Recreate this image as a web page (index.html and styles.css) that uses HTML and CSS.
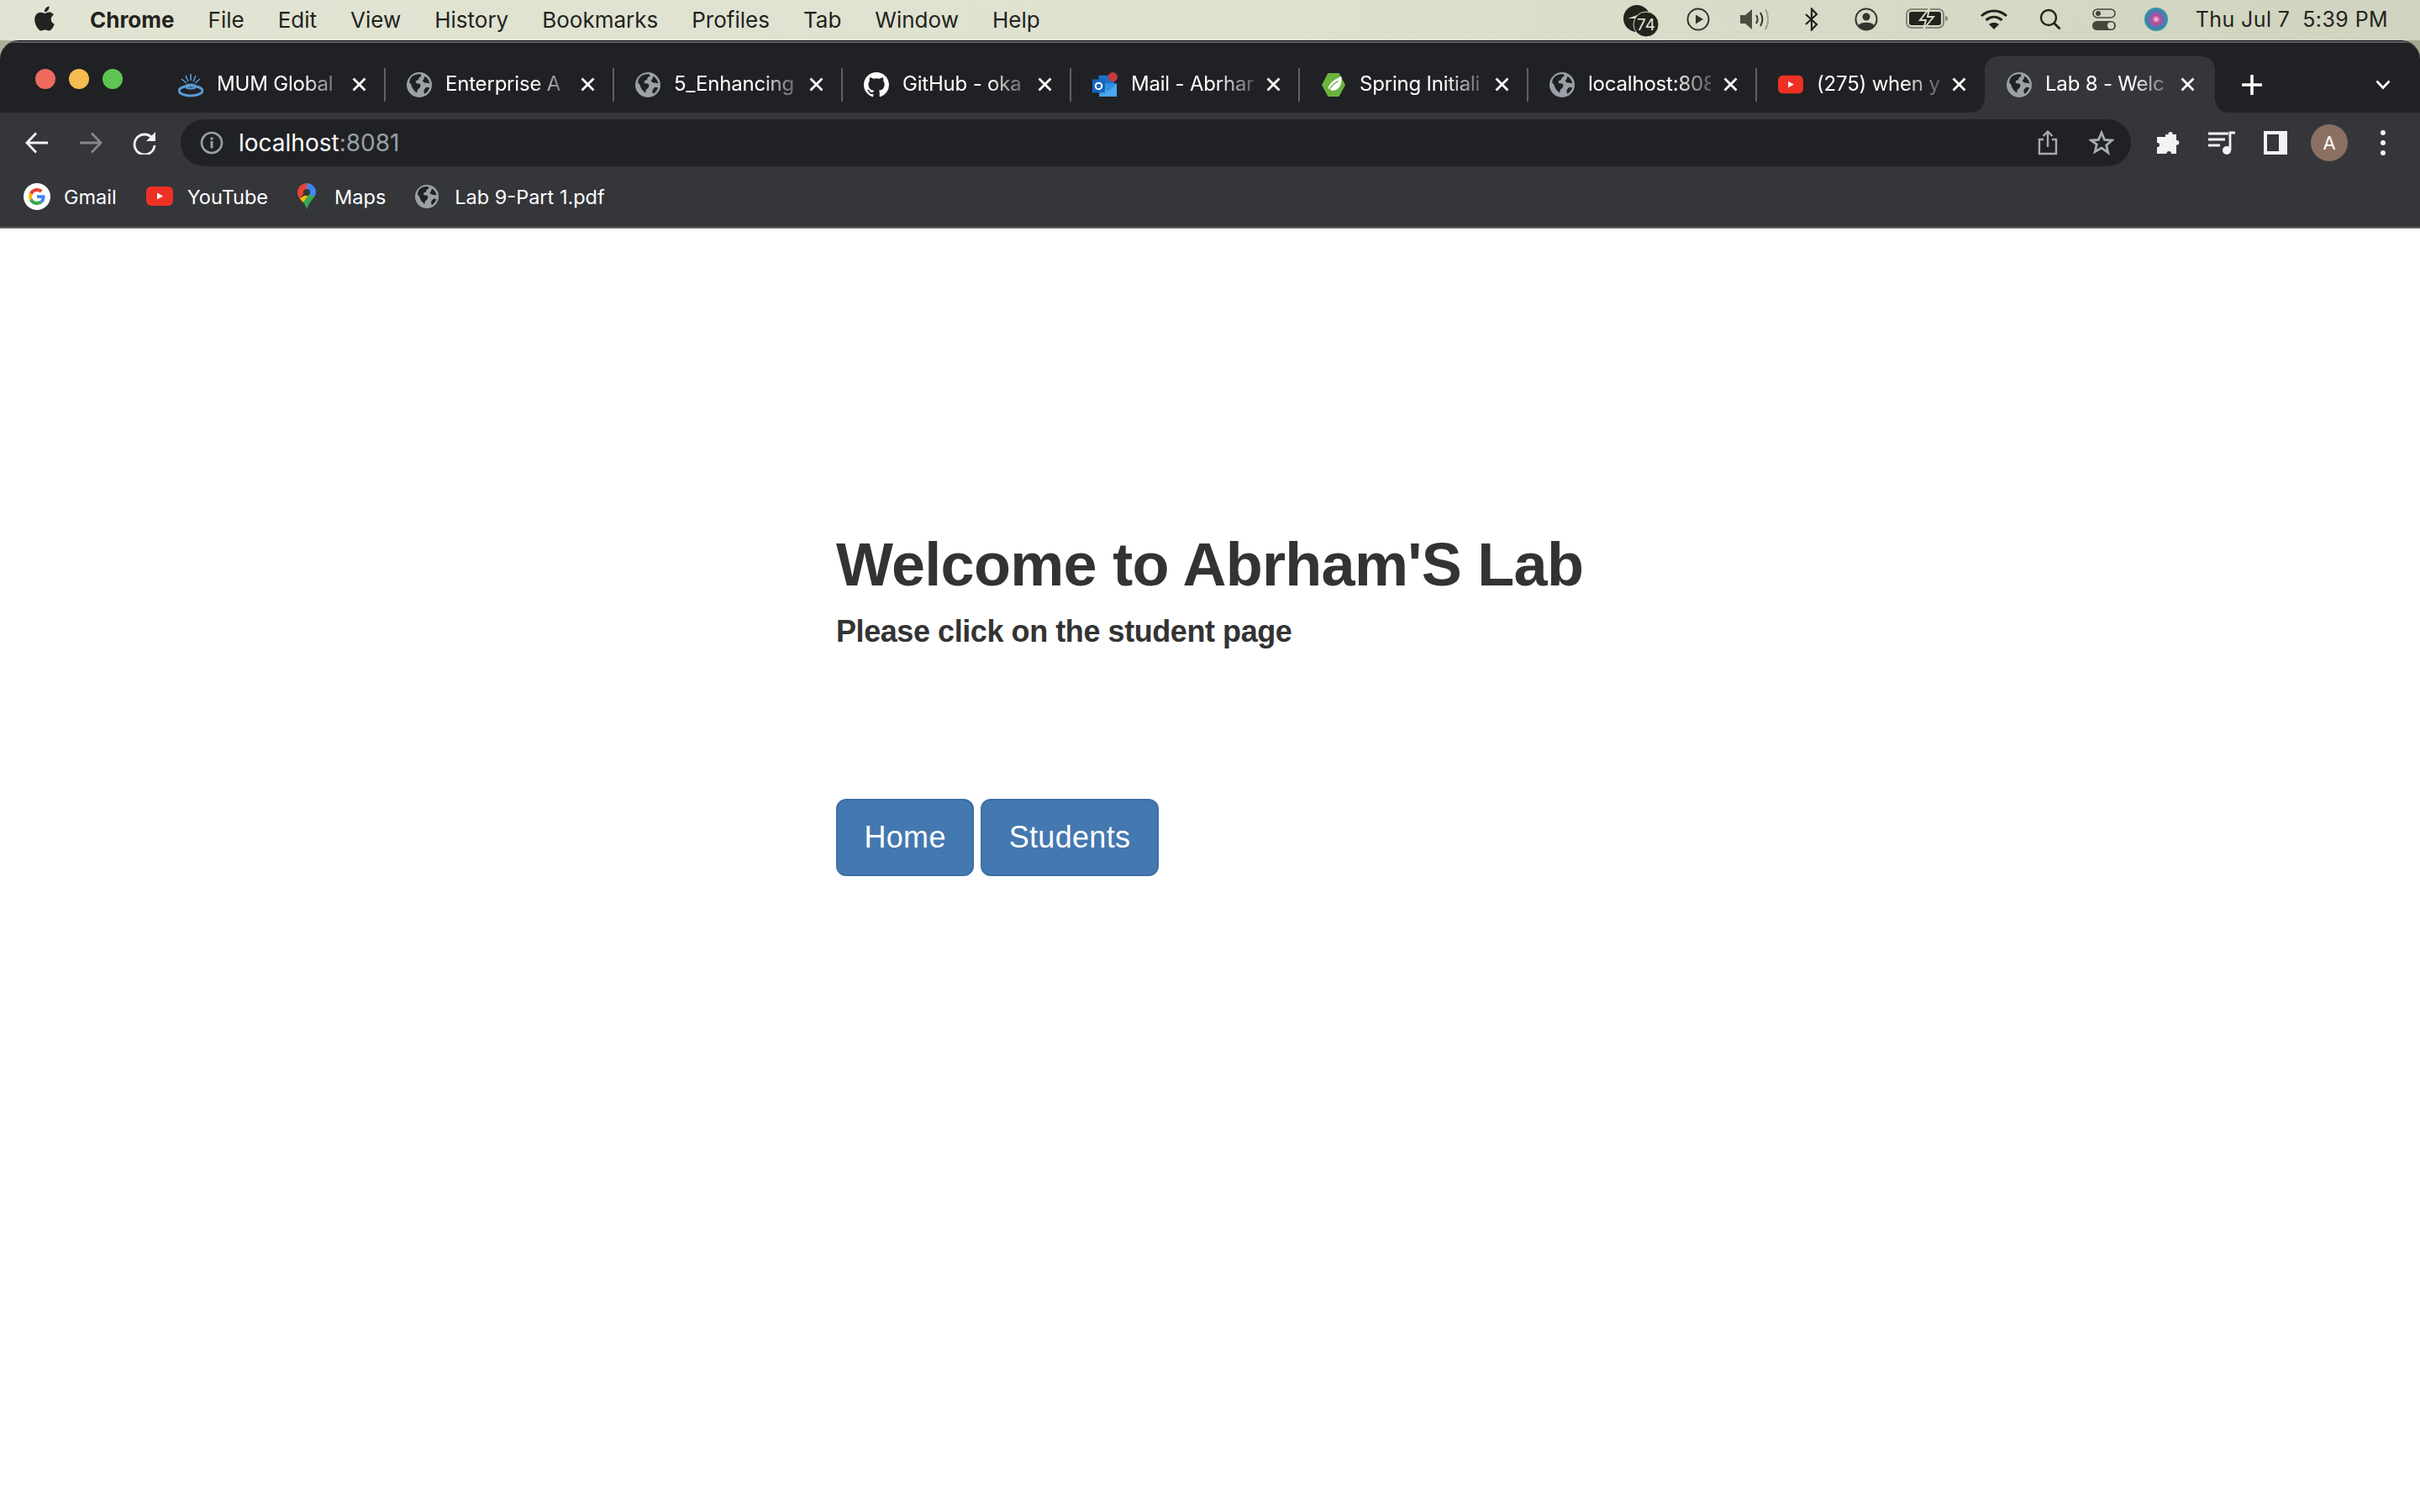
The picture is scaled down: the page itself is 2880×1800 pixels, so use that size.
FILE: index.html
```html
<!DOCTYPE html>

<html>
  <head>
    <title>Lab 8 - Welcome</title>
    <meta charset="utf-8" />
    <meta name="viewport" content="width=device-width, initial-scale=1" />
    <link rel="stylesheet" href="styles.css">
  </head>
  <body>
    <!-- shared icons -->
    <svg class="sprite" xmlns="http://www.w3.org/2000/svg">
      <symbol id="globe" viewBox="0 0 28 28">
        <circle cx="14" cy="14" r="14" fill="#9aa0a6"/>
        <path fill="#202124" d="M5 5.500C8 2.600 12 1.600 15.500 2.200l1 2-2.600 1.600-1 2.600-3 1.400.6 2.600 3.600.2 1.400 1.600-1 3-2.400 2.200-.8 3.400C8 20.800 5.600 17 5.200 14L3 11.500C3 9.500 3.800 7 5 5.500zM20 4.500c2.800 1.600 5 4.800 5.500 8l-2.500-.6-3.400-.3-2.200-2.100 1.400-1.500zM22 16.500l3.300.6c-.8 3-2.700 5.500-5.300 7l-1.200-2.600 1.200-3z"/>
      </symbol>
      <symbol id="close" viewBox="0 0 17 17">
        <path d="M1.500 1.500l14 14M15.500 1.500l-14 14" stroke="#fff" stroke-width="2.800" fill="none"/>
      </symbol>
      <symbol id="youtube" viewBox="0 0 32 24">
        <rect x="0" y="0" width="32" height="23" rx="6" fill="#ee3124"/>
        <path d="M13 7.500l7 4-7 4z" fill="#fff"/>
      </symbol>
    </svg>

    <div class="menubar">
      <svg class="apple" viewBox="0 0 26 32">
        <path fill="#22231f" d="M21.700 17c0-3.300 2.700-4.900 2.800-5-1.500-2.200-3.900-2.600-4.700-2.600-2-.2-3.900 1.200-4.900 1.200s-2.600-1.200-4.200-1.100c-2.200 0-4.200 1.200-5.300 3.200-2.300 3.900-.6 9.700 1.600 12.900 1.100 1.600 2.400 3.300 4.100 3.300 1.600-.1 2.300-1 4.200-1s2.500 1 4.200 1c1.700 0 2.900-1.600 3.900-3.200 1.200-1.800 1.700-3.600 1.800-3.700-.1 0-3.500-1.300-3.500-5zM18.500 7.300c.9-1.100 1.500-2.600 1.300-4.100-1.300.1-2.900.9-3.800 2-.8.9-1.500 2.500-1.300 3.900 1.400.1 2.900-.7 3.800-1.800z"/>
      </svg>
      <span class="menu-item app-name">Chrome</span>
      <span class="menu-item">File</span>
      <span class="menu-item">Edit</span>
      <span class="menu-item">View</span>
      <span class="menu-item">History</span>
      <span class="menu-item">Bookmarks</span>
      <span class="menu-item">Profiles</span>
      <span class="menu-item">Tab</span>
      <span class="menu-item">Window</span>
      <span class="menu-item">Help</span>

      <div class="status">
        <svg class="st st-badge" viewBox="0 0 42 38">
          <circle cx="16" cy="16" r="16" fill="#22231c"/>
          <path d="M5 16l17-6-5 9-3-3z" fill="#d6d9c6"/>
          <circle cx="27" cy="23" r="15" fill="#22231c" stroke="#d6d9c6" stroke-width="1"/>
          <text x="27" y="30" class="badge-num">74</text>
        </svg>
        <svg class="st st-play" viewBox="0 0 28 28">
          <circle cx="14" cy="14" r="12.500" fill="none" stroke="#33342c" stroke-width="2"/>
          <path d="M11 8.500l9 5.500-9 5.500z" fill="#33342c"/>
        </svg>
        <svg class="st st-sound" viewBox="0 0 38 28">
          <path d="M1 9h6l8-7v24l-8-7H1z" fill="#4b4c42"/>
          <path d="M20 9c2 3 2 7 0 10M25 6c3 5 3 11 0 16" fill="none" stroke="#33342c" stroke-width="2"/>
          <path d="M31 2c4 7 4 17 0 24" fill="none" stroke="#a0a294" stroke-width="2"/>
        </svg>
        <svg class="st st-bt" viewBox="0 0 18 28">
          <path d="M2 8l13 12-6 6.500V1.500l6 6.500L2 20" fill="none" stroke="#22231c" stroke-width="2.200"/>
        </svg>
        <svg class="st st-user" viewBox="0 0 28 28">
          <circle cx="14" cy="14" r="12.500" fill="none" stroke="#33342c" stroke-width="2"/>
          <circle cx="14" cy="11" r="4.500" fill="#33342c"/>
          <path d="M4.500 21c3-4.500 16-4.500 19 0-2 3-5 5.500-9.500 5.500S6.500 24 4.500 21z" fill="#33342c"/>
        </svg>
        <svg class="st st-battery" viewBox="0 0 52 26">
          <rect x="1" y="1" width="44" height="22" rx="6" fill="none" stroke="#85877a" stroke-width="2"/>
          <rect x="4" y="4" width="38" height="16" rx="3" fill="#22231c"/>
          <path d="M47 9c2 0 3 1 3 3s-1 3-3 3z" fill="#85877a"/>
          <path d="M28 0L17 14h7l-3 11 12-15h-7z" fill="#22231c" stroke="#d6d9c6" stroke-width="2"/>
        </svg>
        <svg class="st st-wifi" viewBox="0 0 34 26">
          <path d="M2 9c9-8 21-8 30 0M7.500 14c6-5 13-5 19 0" fill="none" stroke="#22231c" stroke-width="3"/>
          <path d="M17 25l-6-6c3.500-2.600 8.500-2.600 12 0z" fill="#22231c"/>
        </svg>
        <svg class="st st-search" viewBox="0 0 26 26">
          <circle cx="11" cy="11" r="9" fill="none" stroke="#22231c" stroke-width="2.400"/>
          <path d="M17.500 17.500l7 7" stroke="#22231c" stroke-width="2.800"/>
        </svg>
        <svg class="st st-control" viewBox="0 0 28 26">
          <rect x="1" y="1" width="26" height="10" rx="5" fill="none" stroke="#45463c" stroke-width="1.600"/>
          <circle cx="7" cy="6" r="3" fill="#45463c"/>
          <rect x="0" y="15" width="28" height="11" rx="5.500" fill="#45463c"/>
          <circle cx="22" cy="20.500" r="4" fill="#d6d9c6"/>
        </svg>
        <svg class="st st-siri" viewBox="0 0 28 28">
          <defs>
            <radialGradient id="siri-a" cx="0.5" cy="0.5" r="0.55">
              <stop offset="0" stop-color="#e8d8ec"/>
              <stop offset="0.3" stop-color="#c04a95"/>
              <stop offset="0.7" stop-color="#3f7fb5"/>
              <stop offset="1" stop-color="#2fa896"/>
            </radialGradient>
          </defs>
          <circle cx="14" cy="14" r="14" fill="url(#siri-a)"/>
        </svg>
        <span class="clock">Thu Jul 7&nbsp;&nbsp;5:39 PM</span>
      </div>
    </div>

    <div class="desk">
      <div class="window">
        <div class="tabstrip">
          <div class="lights">
            <i class="light red"></i>
            <i class="light yellow"></i>
            <i class="light green"></i>
          </div>

          <div class="tab sep">
            <svg class="favicon" viewBox="0 0 30 28">
              <g fill="none" stroke="#5b9bd5" stroke-width="1.600">
                <path d="M15 1v8M9 3l3 7M21 3l-3 7M4 7l6 5M26 7l-6 5"/>
              </g>
              <ellipse cx="15" cy="21" rx="14" ry="6" fill="none" stroke="#5b9bd5" stroke-width="3"/>
              <ellipse cx="15" cy="16" rx="6" ry="2.500" fill="none" stroke="#5b9bd5" stroke-width="2"/>
            </svg>
            <span class="tab-title">MUM Global</span>
            <svg class="tab-close"><use href="#close"/></svg>
          </div>
          <div class="tab sep">
            <svg class="favicon"><use href="#globe"/></svg>
            <span class="tab-title">Enterprise A</span>
            <svg class="tab-close"><use href="#close"/></svg>
          </div>
          <div class="tab sep">
            <svg class="favicon"><use href="#globe"/></svg>
            <span class="tab-title">5_Enhancing</span>
            <svg class="tab-close"><use href="#close"/></svg>
          </div>
          <div class="tab sep">
            <svg class="favicon" viewBox="0 0 16 16">
              <path fill="#fff" d="M8 0C3.580 0 0 3.580 0 8c0 3.540 2.290 6.530 5.470 7.590.4.070.55-.17.55-.38 0-.19-.01-.82-.01-1.490-2.010.37-2.530-.49-2.690-.94-.09-.23-.48-.94-.82-1.130-.28-.15-.68-.52-.01-.53.63-.01 1.080.58 1.230.82.72 1.210 1.870.87 2.330.66.07-.52.28-.87.51-1.070-1.780-.2-3.640-.89-3.640-3.950 0-.87.31-1.590.82-2.150-.08-.2-.36-1.020.08-2.120 0 0 .67-.21 2.200.82.64-.18 1.320-.27 2-.27.68 0 1.360.09 2 .27 1.530-1.040 2.200-.82 2.200-.82.44 1.100.16 1.920.08 2.120.51.56.82 1.270.82 2.150 0 3.070-1.870 3.750-3.650 3.950.29.25.54.73.54 1.480 0 1.070-.01 1.930-.01 2.200 0 .21.15.46.55.38A8.013 8.013 0 0016 8c0-4.420-3.580-8-8-8z"/>
            </svg>
            <span class="tab-title">GitHub - oka</span>
            <svg class="tab-close"><use href="#close"/></svg>
          </div>
          <div class="tab sep">
            <svg class="favicon" viewBox="0 0 32 32">
              <rect x="8" y="4" width="20" height="14" fill="#1f6fc4"/>
              <path d="M9 14h22v17H9z" fill="#2f8fe0"/>
              <path d="M9 15l11 9 11-9v16H9z" fill="#4ca8ec"/>
              <rect x="0" y="9" width="16" height="17" fill="#1565c0"/>
              <circle cx="8" cy="17.500" r="4" fill="none" stroke="#fff" stroke-width="2.200"/>
              <circle cx="26" cy="6" r="6" fill="#c43a3f"/>
            </svg>
            <span class="tab-title">Mail - Abrhar</span>
            <svg class="tab-close"><use href="#close"/></svg>
          </div>
          <div class="tab sep">
            <svg class="favicon" viewBox="0 0 30 32">
              <path d="M8 1h14l8 15-8 15H8L0 16z" fill="#6db33f"/>
              <path d="M25 5c1 9-2 17-9 18-4 .5-7-1-8-3 3-8 9-11 17-15z" fill="#fff"/>
              <path d="M9 23c3-6 7-9 12-12" stroke="#6db33f" stroke-width="1.500" fill="none"/>
            </svg>
            <span class="tab-title">Spring Initiali</span>
            <svg class="tab-close"><use href="#close"/></svg>
          </div>
          <div class="tab sep">
            <svg class="favicon"><use href="#globe"/></svg>
            <span class="tab-title">localhost:808</span>
            <svg class="tab-close"><use href="#close"/></svg>
          </div>
          <div class="tab">
            <svg class="favicon"><use href="#youtube"/></svg>
            <span class="tab-title">(275) when y</span>
            <svg class="tab-close"><use href="#close"/></svg>
          </div>
          <div class="tab active">
            <svg class="favicon"><use href="#globe"/></svg>
            <span class="tab-title">Lab 8 - Welc</span>
            <svg class="tab-close"><use href="#close"/></svg>
          </div>

          <svg class="new-tab" viewBox="0 0 24 24">
            <path d="M12 1v22M1 12h22" stroke="#fff" stroke-width="3.600" stroke-linecap="round"/>
          </svg>
          <svg class="tab-list" viewBox="0 0 18 12">
            <path d="M1.500 1.500L9 9.500l7.500-8" fill="none" stroke="#fff" stroke-width="2.600"/>
          </svg>
        </div>

        <div class="toolbar">
          <svg class="nav-icon" viewBox="0 0 28 26">
            <path d="M27 13H3M13 1.500L2 13l11 11.500" fill="none" stroke="#f1f3f4" stroke-width="2.800"/>
          </svg>
          <svg class="nav-icon dim" viewBox="0 0 28 26">
            <path d="M1 13h24M15 1.500L26 13 15 24.500" fill="none" stroke="#85878a" stroke-width="2.800"/>
          </svg>
          <svg class="nav-icon reload" viewBox="0 0 28 28">
            <path d="M23 8A12 12 0 1 0 26 17" fill="none" stroke="#f1f3f4" stroke-width="2.800"/>
            <path d="M27 1v11H16z" fill="#f1f3f4"/>
          </svg>
          <div class="omnibox">
            <svg class="info" viewBox="0 0 28 28">
              <circle cx="14" cy="14" r="12" fill="none" stroke="#9aa0a6" stroke-width="2.600"/>
              <rect x="12.500" y="12" width="3" height="8.500" fill="#9aa0a6"/>
              <rect x="12.500" y="7.500" width="3" height="3" fill="#9aa0a6"/>
            </svg>
            <span class="url">localhost<span class="url-port">:8081</span></span>
            <svg class="omni-share" viewBox="0 0 24 30">
              <path d="M7 11H2v17h20V11h-5" fill="none" stroke="#a8abae" stroke-width="2.400"/>
              <path d="M12 20V2M6.500 7L12 1.500 17.500 7" fill="none" stroke="#a8abae" stroke-width="2.400"/>
            </svg>
            <svg class="omni-star" viewBox="0 0 30 30">
              <path d="M15 3l3.500 8.300 9 .7-6.800 5.900 2.100 8.800L15 21.100l-7.800 4.600 2.100-8.800L2.500 12l9-.7z" fill="none" stroke="#a8abae" stroke-width="2.800"/>
            </svg>
          </div>
          <div class="toolbar-right">
            <svg class="puzzle" viewBox="0 0 30 30">
              <path fill="#f1f3f4" d="M11 5h3.500c-1-4 6-4 5 0H24v7c4-1 5 6 0 5.500V28h-6c.5-4-6-4-5.500 0H1v-8c4 1 4-6 0-5V8h10z"/>
            </svg>
            <svg class="media" viewBox="0 0 34 28">
              <path d="M0 3h24M0 10h20M0 17h14" stroke="#f1f3f4" stroke-width="2.800"/>
              <path d="M26 23V2h6" fill="none" stroke="#f1f3f4" stroke-width="2.800"/>
              <circle cx="22" cy="23" r="5" fill="#f1f3f4"/>
            </svg>
            <svg class="side-panel" viewBox="0 0 28 28">
              <path fill-rule="evenodd" fill="#f1f3f4" d="M0 0h28v28H0zM4 4v20h14V4z"/>
            </svg>
            <div class="avatar">A</div>
            <svg class="dots" viewBox="0 0 6 30">
              <circle cx="3" cy="3" r="3" fill="#f1f3f4"/>
              <circle cx="3" cy="15" r="3" fill="#f1f3f4"/>
              <circle cx="3" cy="27" r="3" fill="#f1f3f4"/>
            </svg>
          </div>
        </div>

        <div class="bookmarks">
          <div class="bookmark">
            <svg class="bm-g" viewBox="0 0 64 64">
              <circle cx="32" cy="32" r="32" fill="#fff"/>
              <g transform="translate(12 12) scale(0.833)">
                <path fill="#EA4335" d="M24 9.500c3.540 0 6.710 1.220 9.210 3.600l6.850-6.850C35.900 2.380 30.470 0 24 0 14.620 0 6.510 5.380 2.560 13.220l7.980 6.190C12.430 13.720 17.740 9.500 24 9.500z"/>
                <path fill="#4285F4" d="M46.980 24.550c0-1.570-.15-3.090-.38-4.550H24v9.020h12.940c-.58 2.960-2.260 5.480-4.780 7.180l7.730 6c4.510-4.180 7.090-10.360 7.090-17.650z"/>
                <path fill="#FBBC05" d="M10.530 28.590c-.48-1.450-.76-2.990-.76-4.590s.27-3.140.76-4.590l-7.980-6.190C.92 16.460 0 20.120 0 24c0 3.880.92 7.540 2.560 10.780l7.970-6.190z"/>
                <path fill="#34A853" d="M24 48c6.480 0 11.930-2.130 15.890-5.810l-7.730-6c-2.150 1.450-4.920 2.300-8.160 2.300-6.260 0-11.570-4.220-13.470-9.910l-7.980 6.190C6.510 42.620 14.620 48 24 48z"/>
              </g>
            </svg>
            <span>Gmail</span>
          </div>
          <div class="bookmark">
            <svg class="bm-yt"><use href="#youtube"/></svg>
            <span>YouTube</span>
          </div>
          <div class="bookmark">
            <svg class="bm-maps" viewBox="0 0 22 32">
              <path d="M11 0C5 0 0 5 0 11c0 3 1 5 2.500 7L11 9z" fill="#ea4335"/>
              <path d="M11 0c3 0 6 1.300 8 3.500L11 11z" fill="#4285f4"/>
              <path d="M19 3.500c2 2 3 4.500 3 7.500 0 2-1 4-2 5.500L11 11z" fill="#4285f4"/>
              <path d="M2.500 18C4 20 5 21 7 23l13-6.500-6-4.500-11.500 6z" fill="#fbbc05"/>
              <path d="M7 23c2 2.500 3.500 5 4 9 .5-4 3-8 9-15.500L14 12z" fill="#34a853"/>
              <circle cx="11" cy="11" r="4" fill="#35363a"/>
            </svg>
            <span>Maps</span>
          </div>
          <div class="bookmark">
            <svg class="favicon"><use href="#globe"/></svg>
            <span>Lab 9-Part 1.pdf</span>
          </div>
        </div>

        <main class="page">
          <h1 class="page-title">Welcome to Abrham'S Lab</h1>
          <h4 class="page-sub">Please click on the student page</h4>
          <div class="actions">
            <a class="btn">Home</a>
            <a class="btn">Students</a>
          </div>
        </main>
      </div>
    </div>
  </body>
</html>
```

FILE: styles.css
```css
html, body {
  margin: 0;
  padding: 0;
  height: 100%;
}

body {
  display: flex;
  flex-direction: column;
  width: 2880px;
  height: 1800px;
  overflow: hidden;
  font-family: Inter, "Liberation Sans", sans-serif;
  background-color: #fff;
}

.sprite {
  display: none;
}

/* mac menu bar */

.menubar {
  display: flex;
  align-items: center;
  flex: 0 0 48px;
  height: 48px;
  padding: 0 38px 2px 36px;
  box-sizing: border-box;
  background: linear-gradient(90deg, #e1e4d2, #dfe2cf 50%, #d0d3be);
  color: #22231f;
  font-size: 26px;
}

.apple {
  width: 30px;
  height: 36px;
  margin-right: 41px;
  margin-top: -2px;
}

.menu-item {
  margin-right: 40px;
  white-space: nowrap;
}

.app-name {
  font-weight: 700;
}

.status {
  display: flex;
  align-items: center;
  margin-left: auto;
  height: 100%;
}

.st {
  display: block;
  flex: none;
}

.st-badge {
  width: 42px;
  height: 38px;
  margin-top: 4px;
  margin-right: 33px;
}

.badge-num {
  fill: #e8e8e0;
  font-family: Inter, sans-serif;
  font-size: 19px;
  text-anchor: middle;
}

.st-play {
  width: 28px;
  height: 28px;
  margin-right: 35px;
}

.st-sound {
  width: 38px;
  height: 28px;
  margin-right: 39px;
}

.st-bt {
  width: 18px;
  height: 28px;
  margin-right: 42px;
}

.st-user {
  width: 28px;
  height: 28px;
  margin-right: 33px;
}

.st-battery {
  width: 52px;
  height: 26px;
  margin-right: 36px;
}

.st-wifi {
  width: 34px;
  height: 26px;
  margin-right: 37px;
}

.st-search {
  width: 26px;
  height: 26px;
  margin-right: 37px;
}

.st-control {
  width: 28px;
  height: 26px;
  margin-right: 34px;
}

.st-siri {
  width: 28px;
  height: 28px;
  margin-right: 33px;
}

.clock {
  font-size: 25px;
  letter-spacing: 0.400px;
  white-space: nowrap;
}

/* browser window */

.desk {
  flex: 1;
  display: flex;
  min-height: 0;
  background: linear-gradient(90deg, #aeb09a, #a6a88f);
}

.window {
  flex: 1;
  display: flex;
  flex-direction: column;
  min-width: 0;
  background-color: #fff;
  border-radius: 22px 22px 0 0;
  overflow: hidden;
  border-top: 1px solid #111;
}

.tabstrip {
  display: flex;
  align-items: flex-end;
  flex: 0 0 85px;
  box-sizing: border-box;
  padding-top: 16px;
  background-color: #202124;
  border-top: 2px solid #5f6063;
  position: relative;
}

.lights {
  display: flex;
  gap: 16px;
  width: 144px;
  height: 68px;
  padding-left: 42px;
  margin-top: -7px;
  align-self: flex-start;
  align-items: center;
}

.light {
  display: block;
  width: 24px;
  height: 24px;
  border-radius: 50%;
}

.red {
  background-color: #ee6a5f;
}

.yellow {
  background-color: #f5bd4f;
}

.green {
  background-color: #5fc454;
}

.tab {
  position: relative;
  display: flex;
  align-items: center;
  flex: 0 0 272px;
  width: 272px;
  height: 67px;
  box-sizing: border-box;
  padding-left: 26px;
  color: #fff;
  font-size: 24px;
}

.tab.sep::after {
  content: "";
  position: absolute;
  right: -1px;
  top: 14px;
  width: 2px;
  height: 40px;
  background-color: #5f6063;
}

.tab.active {
  flex-basis: 274px;
  width: 274px;
  background-color: #35363a;
  border-radius: 16px 16px 0 0;
}

.tab.active::before,
.tab.active::after {
  content: "";
  position: absolute;
  bottom: 0;
  width: 16px;
  height: 16px;
}

.tab.active::before {
  left: -16px;
  background: radial-gradient(circle at 0 0, transparent 15.500px, #35363a 16px);
}

.tab.active::after {
  right: -16px;
  background: radial-gradient(circle at 100% 0, transparent 15.500px, #35363a 16px);
}

.favicon {
  flex: none;
  width: 28px;
  height: 28px;
}

.tab .favicon {
  width: 30px;
  height: 30px;
  margin-right: 16px;
}

.tab-title {
  width: 146px;
  flex: none;
  padding-bottom: 3px;
  letter-spacing: -0.200px;
  overflow: hidden;
  white-space: nowrap;
  -webkit-mask-image: linear-gradient(90deg, #000 70%, rgba(0, 0, 0, 0.25) 100%);
  mask-image: linear-gradient(90deg, #000 70%, rgba(0, 0, 0, 0.25) 100%);
}

.tab-close {
  flex: none;
  width: 17px;
  height: 17px;
  margin-left: 15px;
}

.new-tab {
  align-self: center;
  width: 24px;
  height: 24px;
  margin-left: 32px;
}

.tab-list {
  align-self: center;
  width: 18px;
  height: 12px;
  margin-left: auto;
  margin-right: 35px;
}

.toolbar {
  display: flex;
  align-items: center;
  flex: 0 0 72px;
  box-sizing: border-box;
  padding: 8px 0 8px 30px;
  background-color: #35363a;
}

.nav-icon {
  flex: none;
  width: 28px;
  height: 26px;
  margin-right: 36px;
}

.nav-icon.reload {
  width: 28px;
  height: 28px;
  margin-right: 29px;
}

.omnibox {
  flex: 1;
  display: flex;
  align-items: center;
  height: 56px;
  box-sizing: border-box;
  padding: 0 20px 0 23px;
  background-color: #202124;
  border-radius: 28px;
}

.info {
  flex: none;
  width: 28px;
  height: 28px;
  margin-right: 18px;
}

.url {
  color: #fff;
  font-size: 28px;
}

.url-port {
  color: #9aa0a6;
}

.omni-share {
  width: 24px;
  height: 30px;
  margin-left: auto;
  margin-right: 37px;
}

.omni-star {
  width: 30px;
  height: 30px;
}

.toolbar-right {
  display: flex;
  align-items: center;
  padding-left: 30px;
  padding-right: 41px;
}

.puzzle {
  width: 30px;
  height: 30px;
  margin-right: 32px;
}

.media {
  width: 34px;
  height: 28px;
  margin-right: 32px;
}

.side-panel {
  width: 28px;
  height: 28px;
  margin-right: 28px;
}

.avatar {
  width: 44px;
  height: 44px;
  line-height: 44px;
  border-radius: 50%;
  background-color: #8a7063;
  color: #fff;
  font-size: 22px;
  text-align: center;
  margin-right: 39px;
}

.dots {
  width: 6px;
  height: 30px;
}

.bookmarks {
  display: flex;
  align-items: center;
  flex: 0 0 66px;
  height: 66px;
  box-sizing: border-box;
  padding-left: 28px;
  padding-bottom: 8px;
  gap: 35px;
  background-color: #35363a;
  border-bottom: 2px solid #5f6063;
}

.bookmark {
  display: flex;
  align-items: center;
  color: #fff;
  font-size: 23.500px;
  white-space: nowrap;
}

.bm-g {
  width: 32px;
  height: 32px;
  margin-right: 16px;
}

.bm-yt {
  width: 32px;
  height: 24px;
  margin-right: 17px;
}

.bm-maps {
  width: 22px;
  height: 32px;
  margin-right: 22px;
}

.bookmark .favicon {
  margin-right: 19px;
}

/* the actual page */

.page {
  flex: 1;
  padding: 361px 0 0 995px;
  background-color: #fff;
  color: #333;
  font-family: "Liberation Sans", Arial, sans-serif;
}

.page-title {
  margin: 0;
  font-size: 72px;
  font-weight: 700;
  line-height: 79px;
  letter-spacing: -0.700px;
}

.page-sub {
  margin: 20px 0 0 0;
  font-size: 36px;
  font-weight: 700;
  line-height: 40px;
  letter-spacing: -0.430px;
}

.actions {
  display: flex;
  gap: 8px;
  margin-top: 179px;
}

.btn {
  display: block;
  padding: 20px 31.500px;
  border: 2px solid #3d6ea3;
  border-radius: 12px;
  background-color: #4478b0;
  color: #fff;
  font-size: 36px;
  line-height: 48px;
  letter-spacing: 0.300px;
}
```
